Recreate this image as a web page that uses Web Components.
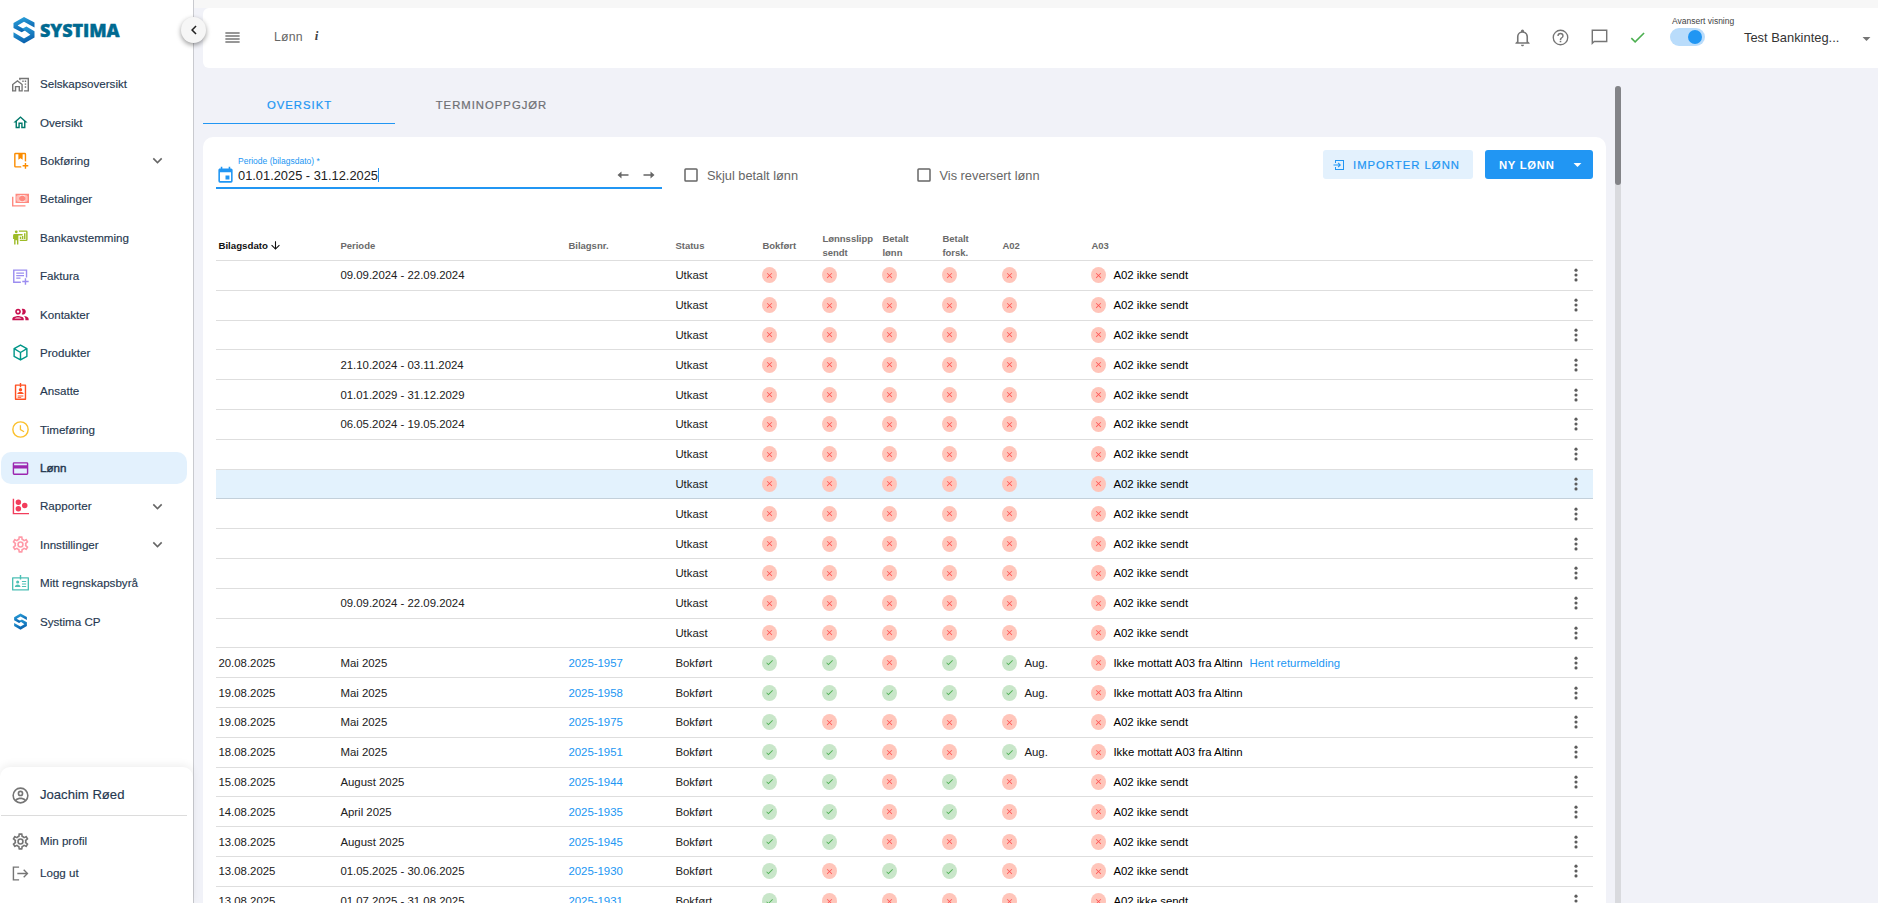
<!DOCTYPE html>
<html lang="no">
<head>
<meta charset="utf-8">
<title>Lønn</title>
<style>
  body {
    margin: 0;
    height: 903px;
    overflow: hidden;
    background: #f1f2f8;
    font-family: "Liberation Sans", Arial, sans-serif;
    font-size: 12px;
    color: #212121;
  }
</style>
</head>
<body>
<app-shell>
  <side-bar slot="side">
    <nav-item icon="homework" color="#757575">Selskapsoversikt</nav-item>
    <nav-item icon="home" color="#00796b">Oversikt</nav-item>
    <nav-item icon="bookplus" color="#fb8c00" more>Bokføring</nav-item>
    <nav-item icon="cash" color="#ff8a80">Betalinger</nav-item>
    <nav-item icon="teach" color="#9dbb27">Bankavstemming</nav-item>
    <nav-item icon="noteplus" color="#9c8df0">Faktura</nav-item>
    <nav-item icon="people" color="#c8104f">Kontakter</nav-item>
    <nav-item icon="cube" color="#009688">Produkter</nav-item>
    <nav-item icon="badge" color="#ff5022">Ansatte</nav-item>
    <nav-item icon="clock" color="#fbc02d">Timeføring</nav-item>
    <nav-item icon="card" color="#9c27b0" active>Lønn</nav-item>
    <nav-item icon="scatter" color="#f23d5c" more>Rapporter</nav-item>
    <nav-item icon="cog" color="#ff9aa8" more>Innstillinger</nav-item>
    <nav-item icon="idcard" color="#4dc0b5">Mitt regnskapsbyrå</nav-item>
    <nav-item icon="logo" color="#0277bd">Systima CP</nav-item>
    <nav-item slot="user" icon="account" color="#757575" big>Joachim Røed</nav-item>
    <nav-item slot="account" icon="cog" color="#757575">Min profil</nav-item>
    <nav-item slot="account" icon="logout" color="#757575">Logg ut</nav-item>
  </side-bar>
  <top-bar heading="Lønn" company="Test Bankinteg..."></top-bar>
  <tab-strip>
    <span class="on">OVERSIKT</span>
    <span>TERMINOPPGJØR</span>
  </tab-strip>
  <content-card>
    <filter-bar></filter-bar>
    <payroll-table></payroll-table>
  </content-card>
</app-shell>

<script>
const ICONS = {
  homework: `<path fill-rule="evenodd" d="M0 11.500 7.700 5.500l7.500 6V22H9.300v-6H6v6H0zM2 12.500V20h2v-6h7.300v6h2v-7.500L7.700 8z"/><path d="M10 2.500h14V22h-7v-2h5V4.500H12V6.500L10 5z"/><path d="M14.500 6.500h2v2h-2zm3.500 0h2v2h-2zm0 4h2v2h-2zm0 4h2v2h-2z"/>`,
  home: `<path d="M12 5.690l5 4.500V18h-2v-6H9v6H7v-7.810l5-4.500M12 3L2 12h3v8h6v-6h2v6h6v-8h3L12 3z"/>`,
  bookplus: `<path d="M13 20c0 .7.130 1.370.350 2H5a2 2 0 0 1-2-2V3a2 2 0 0 1 2-2h13a2 2 0 0 1 2 2v10.350A6 6 0 0 0 18 13V3h-3v8l-3-2.300L9 11V3H5v17zM18 15.500v3h-3v2h3v3h2v-3h3v-2h-3v-3z"/>`,
  cash: `<path fill-rule="evenodd" d="M5 4h19v13H5zM8 6a2 2 0 0 1-1.500 1.500v6A2 2 0 0 1 8 15h12.500a2 2 0 0 1 1.500-1.500v-6A2 2 0 0 1 20.500 6zm6.500.6c2.700 0 4.600 1.700 4.600 3.900s-1.900 3.900-4.600 3.900-4.600-1.700-4.600-3.900 1.900-3.900 4.600-3.900z"/><path opacity=".55" d="M8 6a2 2 0 0 1-1.500 1.500v6A2 2 0 0 1 8 15h3V6zM21 6a2 2 0 0 0 1.500 1.500v6A2 2 0 0 0 21 15h-3V6z"/><circle cx="14.500" cy="10.500" r="1.800"/><path d="M0 8h2v12h17v2H0z"/>`,
  teach: `<path d="M20 17a2 2 0 0 0 2-2V4a2 2 0 0 0-2-2H9.460c.350.610.540 1.300.540 2h10v11h-9v2M15 7v2H9v13H7v-6H5v6H3v-8H1.500V9a2 2 0 0 1 2-2H15M8 4a2 2 0 1 1-4 0 2 2 0 0 1 4 0M17 6h2v8h-2zM14 10h2v4h-2zM11 11h2v3h-2z"/>`,
  noteplus: `<path d="M1.500 2h20v11.300h-2V4h-16v15h9v2h-11z"/><path d="M6 6.500h11v1.700H6zm0 3.500h11v1.700H6zm0 3.500h6v1.700H6zM18 14.500h2v3.500h3.500v2H20v3.500h-2V20h-3.500v-2H18z"/>`,
  people: `<path d="M9 13.750c-2.340 0-7 1.170-7 3.500V19h14v-1.750c0-2.330-4.660-3.500-7-3.500zM4.340 17c.840-.580 2.870-1.250 4.660-1.250s3.820.67 4.660 1.250H4.340zM9 12c1.930 0 3.500-1.570 3.500-3.500S10.930 5 9 5 5.500 6.570 5.500 8.500 7.070 12 9 12zm0-5c.830 0 1.500.67 1.500 1.500S9.830 10 9 10s-1.500-.67-1.500-1.500S8.170 7 9 7zm7.040 6.810c1.160.840 1.960 1.960 1.960 3.440V19h4v-1.750c0-2.020-3.500-3.170-5.960-3.440zM15 12c1.930 0 3.500-1.570 3.500-3.500S16.930 5 15 5c-.540 0-1.040.130-1.500.350.630.890 1 1.980 1 3.150s-.370 2.260-1 3.150c.460.220.960.350 1.500.350z" transform="translate(-1.800 -1.800) scale(1.150)"/>`,
  cube: `<path fill="none" stroke="currentColor" stroke-width="2" stroke-linejoin="round" d="M12 1.500l9 5v11l-9 5-9-5v-11zM3 6.500L12 12l9-5.500M12 12v10.500"/>`,
  badge: `<path fill-rule="evenodd" d="M11 0h2v2h6a1 1 0 0 1 1 1v20a1 1 0 0 1-1 1H5a1 1 0 0 1-1-1V3a1 1 0 0 1 1-1h6zM6 4v18h12V4h-5v2h-2V4z"/><circle cx="12" cy="9.500" r="2.400"/><path d="M7.500 15.500c0-3.700 9-3.700 9 0zM8 17.500h8V19H8zM8 20h5v1H8z"/>`,
  clock: `<circle cx="12" cy="12" r="10.800" fill="none" stroke="currentColor" stroke-width="2"/><path d="M11 6h1.800v5.700l4.700 2.800-.9 1.500-5.600-3.400z"/>`,
  card: `<path d="M21 3H3a2 2 0 0 0-2 2v14a2 2 0 0 0 2 2h18a2 2 0 0 0 2-2V5a2 2 0 0 0-2-2m0 16H3v-7h18v7m0-11.500H3V5h18v2.500z"/>`,
  scatter: `<path d="M1 1h2v20h21v2H1V1M9 2.200a3.900 3.900 0 1 1 0 7.800 3.900 3.900 0 0 1 0-7.800m9 4.600a3.900 3.900 0 1 1 0 7.800 3.900 3.900 0 0 1 0-7.800M9 11.200a3.900 3.900 0 1 1 0 7.800 3.900 3.900 0 0 1 0-7.800"/>`,
  cog: `<path transform="translate(-1.800 -1.800) scale(1.150)" d="M12 8a4 4 0 1 1 0 8 4 4 0 0 1 0-8m0 2a2 2 0 1 0 0 4 2 2 0 0 0 0-4m-2 12c-.25 0-.46-.18-.5-.42l-.37-2.650c-.63-.25-1.170-.59-1.690-.99l-2.490 1.010c-.22.080-.49 0-.61-.22l-2-3.460a.493.493 0 0 1 .12-.64l2.110-1.660L4.500 12l.07-1-2.110-1.630a.493.493 0 0 1-.12-.64l2-3.460c.12-.22.39-.31.61-.22l2.490 1c.52-.39 1.060-.73 1.690-.98l.37-2.650c.04-.24.25-.42.5-.42h4c.25 0 .46.18.5.42l.37 2.650c.63.25 1.170.59 1.690.98l2.490-1c.22-.09.49 0 .61.22l2 3.460c.13.22.07.49-.12.640L19.430 11l.07 1-.07 1 2.110 1.630c.19.15.25.42.12.64l-2 3.460c-.12.22-.39.310-.61.220l-2.490-1c-.52.39-1.060.73-1.690.98l-.37 2.650c-.04.24-.25.420-.5.420h-4m1.250-18l-.37 2.610c-1.200.25-2.260.89-3.030 1.780L5.440 7.350l-.75 1.300L6.800 10.200a5.550 5.550 0 0 0 0 3.600l-2.120 1.560.75 1.300 2.430-1.040c.77.88 1.820 1.520 3.010 1.760l.37 2.620h1.520l.37-2.610c1.190-.25 2.240-.89 3.010-1.770l2.430 1.040.75-1.300-2.120-1.550c.4-1.170.4-2.440 0-3.610l2.110-1.550-.75-1.300-2.410 1.040a5.420 5.420 0 0 0-3.030-1.770L12.750 4h-1.500z"/>`,
  idcard: `<path fill-rule="evenodd" d="M11 0h2v3h10a1 1 0 0 1 1 1v17a1 1 0 0 1-1 1H1a1 1 0 0 1-1-1V4a1 1 0 0 1 1-1h10zM1.900 4.900v15.200h20.200V4.900H13v1.600h-2V4.900z"/><circle cx="8" cy="9.800" r="2.200"/><path d="M4 17c0-5 8-5 8 0zM14 8.500h6V10h-6zm0 3.500h6v1.500h-6zm0 3.500h6V17h-6z"/>`,
  logo: `<linearGradient id="g" x1="0" y1="0" x2=".4" y2="1"><stop offset="0" stop-color="#2fa9e0"/><stop offset="1" stop-color="#0a62ae"/></linearGradient><g fill="url(#g)"><path d="M3 6 12 .800 21 5.500V9.800L12 5 6.500 8.200 13.500 12 10 14 3 10.200z"/><path d="M10.500 11 14 9l7 4V18.500L12 23.500 3 18.300V14l9 5.200 5.500-3.200z"/></g>`,
  account: `<path transform="translate(-1.800 -1.800) scale(1.150)" fill-rule="evenodd" d="M12 2a10 10 0 1 1 0 20 10 10 0 0 1 0-20M7.070 18.280c.43-.9 3.050-1.780 4.930-1.780s4.510.88 4.930 1.780A7.900 7.900 0 0 1 12 20a7.900 7.900 0 0 1-4.930-1.720m11.290-1.450c-1.430-1.740-4.900-2.330-6.360-2.330s-4.930.59-6.360 2.330A7.930 7.930 0 0 1 4 12c0-4.410 3.590-8 8-8s8 3.590 8 8c0 1.820-.62 3.500-1.640 4.830M12 6a3.500 3.500 0 1 0 0 7 3.500 3.500 0 0 0 0-7m0 5a1.500 1.500 0 1 1 0-3 1.500 1.500 0 0 1 0 3z"/>`,
  logout: `<path d="M1 2h9v2H3v16h7v2H1zM7.500 11h12l-3.700-3.700L17.200 6l6 6-6 6-1.400-1.400 3.700-3.600h-12z"/>`,
  down: `<path d="M7.410 8.580 12 13.170l4.590-4.590L18 10l-6 6-6-6z"/>`,
  left: `<path d="M15.410 16.580 10.830 12l4.580-4.590L14 6l-6 6 6 6z"/>`,
  caret: `<path d="M7 10l5 5 5-5z"/>`,
  menu: `<path d="M3 5.500h18v1.700H3zm0 3.800h18V11H3zm0 3.700h18v1.700H3zm0 3.800h18v1.700H3z"/>`,
  bell: `<path d="M10 21h4c0 1.100-.9 2-2 2s-2-.9-2-2m11-2v1H3v-1l2-2v-6c0-3.100 2.030-5.830 5-6.710V4a2 2 0 0 1 4 0v.29c2.970.88 5 3.610 5 6.710v6l2 2m-4-8a5 5 0 0 0-10 0v7h10v-7z"/>`,
  help: `<path d="M11 18h2v-2h-2v2m1-16a10 10 0 1 0 0 20 10 10 0 0 0 0-20m0 18.300a8.300 8.300 0 1 1 0-16.600 8.300 8.300 0 0 1 0 16.600M12 6a4 4 0 0 0-4 4h1.800c0-1.200 1-2.200 2.200-2.200s2.200 1 2.200 2.200c0 2-3.100 1.800-3.100 5h1.800c0-2.300 3.100-2.500 3.100-5a4 4 0 0 0-4-4z"/>`,
  chat: `<path d="M2 2h20v16H5.500L2 21.500zM3.800 3.800v13.600l1-1.200h15.400V3.800z"/>`,
  check: `<path d="M21 7 9 19l-5.500-5.500 1.410-1.410L9 16.170 19.590 5.590z"/>`,
  close: `<path d="M19 6.410 17.590 5 12 10.590 6.410 5 5 6.410 10.590 12 5 17.590 6.410 19 12 13.410 17.590 19 19 17.590 13.410 12z"/>`,
  calendar: `<path d="M19 19H5V8h14m-3-7v2H8V1H6v2H5c-1.110 0-2 .89-2 2v14a2 2 0 0 0 2 2h14a2 2 0 0 0 2-2V5a2 2 0 0 0-2-2h-1V1m-1 11h-5v5h5v-5z"/>`,
  arrowleft: `<path d="M1 12l8-7v5.500h14v3H9V19z"/>`,
  arrowright: `<path d="M23 12l-8-7v5.500H1v3h14V19z"/>`,
  arrowdown: `<path d="M11 4h2v12l5.500-5.500 1.420 1.420L12 19.840l-7.920-7.920L5.500 10.500 11 16V4z"/>`,
  box: `<path d="M19 3H5a2 2 0 0 0-2 2v14a2 2 0 0 0 2 2h14a2 2 0 0 0 2-2V5a2 2 0 0 0-2-2m0 2v14H5V5z"/>`,
  dots: `<circle cx="12" cy="5.500" r="2.100"/><circle cx="12" cy="12" r="2.100"/><circle cx="12" cy="18.500" r="2.100"/>`,
  enter: `<path d="M22 2H4v6h2V4h14v16H6v-4H4v6h18zM1 11h11L9.500 8.500 11 7l5 5-5 5-1.500-1.500L12 13H1z"/>`
};

class UiIcon extends HTMLElement {
  constructor() {
    super();
    this.attachShadow({ mode: "open" });
  }

  connectedCallback() {
    const size = this.getAttribute("size") || 19;
    this.shadowRoot.innerHTML = `
      <style>
        :host { display: inline-flex; flex: none; width: ${size}px; height: ${size}px; }
        svg { width: 100%; height: 100%; fill: currentColor; overflow: visible; }
      </style>
      <svg viewBox="0 0 24 24">${ICONS[this.getAttribute("name")]}</svg>`;
  }
}

class AppShell extends HTMLElement {
  constructor() {
    super();
    this.attachShadow({ mode: "open" }).innerHTML = `
      <style>
        :host { display: flex; height: 903px; position: relative; }
        main {
          flex: 1;
          min-width: 0;
          display: flex;
          flex-direction: column;
          padding-left: 9px;
          border-top: 8px solid #f7f7f7;
          box-sizing: border-box;
        }
        .toggle {
          position: absolute;
          left: 181px;
          top: 17px;
          width: 25px;
          height: 26px;
          border-radius: 50%;
          background: #f6f6f6;
          box-shadow: 0 2px 5px rgba(0,0,0,.4);
          display: flex;
          align-items: center;
          justify-content: center;
        }
        .scroll {
          position: absolute;
          left: 1615px;
          top: 86px;
          bottom: 0;
          width: 6px;
          border-radius: 3px 3px 0 0;
          background: #d9dade;
        }
        .thumb { height: 99px; border-radius: 3px; background: #838488; }
      </style>
      <slot name="side"></slot>
      <main><slot></slot></main>
      <div class="toggle"><ui-icon name="left" size="18"></ui-icon></div>
      <div class="scroll"><div class="thumb"></div></div>`;
  }
}

class SideBar extends HTMLElement {
  constructor() {
    super();
    this.attachShadow({ mode: "open" }).innerHTML = `
      <style>
        :host {
          display: flex;
          flex-direction: column;
          width: 194px;
          box-sizing: border-box;
          background: #fff;
          border-right: 1px solid #c9cacf;
        }
        .brand {
          display: flex;
          align-items: center;
          height: 60px;
          padding: 0 0 0 10px;
          box-sizing: border-box;
        }
        .brand b {
          margin: -1px 0 0 2px;
          font: 800 18px "Open Sans", sans-serif;
          color: #006a91;
          -webkit-text-stroke: .4px #006a91;
          letter-spacing: -.1px;
        }
        nav {
          flex: 1;
          display: flex;
          flex-direction: column;
          gap: 6.4px;
          padding: 8.2px 6px 0 1px;
        }
        footer {
          height: 136px;
          box-sizing: border-box;
          padding: 12px 6px 0 1px;
          border-radius: 10px 10px 0 0;
          box-shadow: 0 -2px 8px rgba(0,0,0,.07);
        }
        .user { padding-bottom: 4px; border-bottom: 1px solid #dcdcdc; margin-bottom: 9px; }
      </style>
      <div class="brand">
        <ui-icon name="logo" size="28"></ui-icon>
        <b>SYSTIMA</b>
      </div>
      <nav><slot></slot></nav>
      <footer>
        <div class="user"><slot name="user"></slot></div>
        <slot name="account"></slot>
      </footer>`;
  }
}

class NavItem extends HTMLElement {
  constructor() {
    super();
    this.attachShadow({ mode: "open" });
  }

  connectedCallback() {
    this.shadowRoot.innerHTML = `
      <style>
        :host {
          display: flex;
          align-items: center;
          height: 32px;
          box-sizing: border-box;
          padding: 0 20px 0 11px;
          border-radius: 10px;
          color: #263850;
          font-size: 11.6px;
          -webkit-text-stroke: .15px;
        }
        :host([active]) { background: #e3f1fd; -webkit-text-stroke: .45px; }
        :host([big]) { font-size: 13.1px; }
        ui-icon { margin-right: 11px; }
        .label { flex: 1; padding-bottom: 1px; white-space: nowrap; }
        .more { margin: 0; color: #666; }
      </style>
      <ui-icon name="${this.getAttribute("icon")}" size="17" style="color:${this.getAttribute("color")}"></ui-icon>
      <span class="label"><slot></slot></span>
      ${this.hasAttribute("more") ? '<ui-icon class="more" name="down" size="19"></ui-icon>' : ""}`;
  }
}

class TopBar extends HTMLElement {
  constructor() {
    super();
    this.attachShadow({ mode: "open" });
  }

  connectedCallback() {
    this.shadowRoot.innerHTML = `
      <style>
        :host {
          display: flex;
          align-items: center;
          height: 60px;
          flex: none;
          box-sizing: border-box;
          padding: 0 2px 0 20px;
          background: #fff;
          border-radius: 6px 0 0 6px;
          color: #757575;
        }
        .title { margin: -2px 0 0 32px; font-size: 12.3px; letter-spacing: .2px; color: #666; }
        .info { margin: -4px 0 0 12px; font: italic bold 13px "Liberation Serif", serif; color: #444; }
        .tools { margin: -1px 0 0 auto; display: flex; align-items: center; gap: 19.4px; }
        .ok { color: #4caf50; }
        .adv { margin: -14px 0 0 25px; width: 64px; font-size: 8.5px; color: #444; white-space: nowrap; }
        .switch {
          margin: 2px 0 0 -2px;
          width: 35px;
          height: 18px;
          border-radius: 9px;
          background: #b9dcfb;
          display: flex;
          align-items: center;
          justify-content: flex-end;
          padding-right: 3px;
          box-sizing: border-box;
        }
        .switch::after { content: ""; width: 14px; height: 14px; border-radius: 50%; background: #2196f3; }
        .company { width: 97px; margin: -2px 16px 0 8px; font-size: 12.9px; color: #333; white-space: nowrap; }
        .menu { margin-top: -1px; }
      </style>
      <ui-icon class="menu" name="menu" size="19"></ui-icon>
      <span class="title">${this.getAttribute("heading")}</span>
      <span class="info">i</span>
      <div class="tools">
        <ui-icon name="bell"></ui-icon>
        <ui-icon name="help"></ui-icon>
        <ui-icon name="chat"></ui-icon>
        <ui-icon class="ok" name="check"></ui-icon>
      </div>
      <div class="adv">Avansert visning<div class="switch"></div></div>
      <span class="company">${this.getAttribute("company")}</span>
      <ui-icon name="caret"></ui-icon>`;
  }
}

class TabStrip extends HTMLElement {
  constructor() {
    super();
    this.attachShadow({ mode: "open" }).innerHTML = `
      <style>
        :host { display: flex; flex: none; height: 56px; box-sizing: border-box; padding-top: 18px; }
        ::slotted(span) {
          width: 192px;
          box-sizing: border-box;
          padding-left: 1px;
          text-align: center;
          line-height: 38px;
          font-size: 11.3px;
          letter-spacing: 1px;
          color: #6e6f73;
          -webkit-text-stroke: .2px;
        }
        ::slotted(.on) { color: #2196f3; border-bottom: 1px solid #2196f3; }
      </style>
      <slot></slot>`;
  }
}

class ContentCard extends HTMLElement {
  constructor() {
    super();
    this.attachShadow({ mode: "open" }).innerHTML = `
      <style>
        :host {
          display: block;
          flex: 1;
          min-height: 0;
          overflow: hidden;
          width: 1403px;
          box-sizing: border-box;
          margin-top: 13px;
          padding: 13px 13px 0;
          border-radius: 10px 10px 0 0;
          background: #fff;
        }
      </style>
      <slot></slot>`;
  }
}

class FilterBar extends HTMLElement {
  constructor() {
    super();
    this.attachShadow({ mode: "open" }).innerHTML = `
      <style>
        :host { display: flex; height: 79px; white-space: nowrap; }
        .field {
          width: 446px;
          height: 39px;
          box-sizing: border-box;
          border-bottom: 2px solid #2196f3;
          display: flex;
          align-items: flex-end;
          padding: 0 3px 2px 0;
          color: #2196f3;
        }
        .value { flex: 1; margin-left: 3px; font-size: 8.5px; line-height: 12px; }
        .value div { font-size: 12.85px; line-height: 18px; color: #212121; }
        .value i { display: inline-block; width: 1px; height: 14px; background: #2196f3; vertical-align: -2px; }
        .arrows { color: #666; display: flex; gap: 14px; margin: 0 4px 4px 0; }
        .check { display: flex; align-items: center; height: 18px; margin: 16px 0 0 20px; color: #666; font-size: 12.8px; width: 212.5px; }
        .check ui-icon { margin-right: 7px; }
        .buttons { margin-left: auto; display: flex; gap: 12px; }
        .btn {
          height: 29px;
          box-sizing: border-box;
          display: flex;
          align-items: center;
          border-radius: 3px;
          font-size: 11.3px;
          letter-spacing: 1px;
        }
        .light { width: 150px; padding-left: 10px; background: #e3f1fd; color: #2196f3; -webkit-text-stroke: .2px; }
        .light ui-icon { margin-right: 8px; }
        .blue { width: 108px; padding: 0 6px 0 14px; justify-content: space-between; background: #2196f3; color: #fff; font-weight: bold; letter-spacing: .7px; }
      </style>
      <div class="field">
        <ui-icon name="calendar" size="19"></ui-icon>
        <div class="value">Periode (bilagsdato) *<div>01.01.2025 - 31.12.2025<i></i></div></div>
        <div class="arrows"><ui-icon name="arrowleft" size="12"></ui-icon><ui-icon name="arrowright" size="12"></ui-icon></div>
      </div>
      <div class="check"><ui-icon name="box" size="18"></ui-icon>Skjul betalt lønn</div>
      <div class="check"><ui-icon name="box" size="18"></ui-icon>Vis reversert lønn</div>
      <div class="buttons">
        <div class="btn light"><ui-icon name="enter" size="12"></ui-icon>IMPORTER LØNN</div>
        <div class="btn blue">NY LØNN<ui-icon name="caret" size="19"></ui-icon></div>
      </div>`;
  }
}

class StatusDot extends HTMLElement {
  constructor() {
    super();
    this.attachShadow({ mode: "open" });
  }

  connectedCallback() {
    const ok = this.hasAttribute("ok");
    this.shadowRoot.innerHTML = `
      <style>
        :host {
          display: inline-flex;
          flex: none;
          align-items: center;
          justify-content: center;
          width: 15px;
          height: 16px;
          border-radius: 50%;
          background: ${ok ? "#c8e6c9" : "#ffc5ba"};
          color: ${ok ? "#4caf50" : "#ff5252"};
        }
      </style>
      <ui-icon name="${ok ? "check" : "close"}" size="9"></ui-icon>`;
  }
}

// dato, periode, bilagsnr, flagg (bokført, slipp, lønn, forsk., A02)
const ROWS = [
  ["", "09.09.2024 - 22.09.2024", "", "xxxxx"],
  ["", "", "", "xxxxx"],
  ["", "", "", "xxxxx"],
  ["", "21.10.2024 - 03.11.2024", "", "xxxxx"],
  ["", "01.01.2029 - 31.12.2029", "", "xxxxx"],
  ["", "06.05.2024 - 19.05.2024", "", "xxxxx"],
  ["", "", "", "xxxxx"],
  ["", "", "", "xxxxx"],
  ["", "", "", "xxxxx"],
  ["", "", "", "xxxxx"],
  ["", "", "", "xxxxx"],
  ["", "09.09.2024 - 22.09.2024", "", "xxxxx"],
  ["", "", "", "xxxxx"],
  ["20.08.2025", "Mai 2025", "2025-1957", "vvxvv"],
  ["19.08.2025", "Mai 2025", "2025-1958", "vvvvv"],
  ["19.08.2025", "Mai 2025", "2025-1975", "vxxxx"],
  ["18.08.2025", "Mai 2025", "2025-1951", "vvxxv"],
  ["15.08.2025", "August 2025", "2025-1944", "vvxvx"],
  ["14.08.2025", "April 2025", "2025-1935", "vvxvx"],
  ["13.08.2025", "August 2025", "2025-1945", "vvxxx"],
  ["13.08.2025", "01.05.2025 - 30.06.2025", "2025-1930", "vxvvx"],
  ["13.08.2025", "01.07.2025 - 31.08.2025", "2025-1931", "vxxxx"]
];
const HOVERED = 7;

class PayrollTable extends HTMLElement {
  constructor() {
    super();
    this.attachShadow({ mode: "open" }).innerHTML = `
      <style>
        :host { display: block; font-size: 11.4px; white-space: nowrap; }
        .row {
          display: grid;
          grid-template-columns: 122px 228px 107px 87px 60px 60px 60px 60px 89px 1fr 19px;
          align-items: center;
          height: 29.81px;
          box-sizing: border-box;
          padding: 0 7px 0 2.4px;
          border-bottom: 1px solid #dedede;
        }
        .head {
          height: 32px;
          padding-top: 2px;
          font-size: 9.5px;
          line-height: 14px;
          font-weight: bold;
          color: #6a6a6a;
        }
        .head .sorted { color: #111; font-size: 9.7px; display: flex; align-items: center; gap: 1px; }
        .hover { background: #e3f2fd; border-color: #c3d0da; }
        .cell { display: flex; align-items: center; }
        .cell span { margin-left: 7px; }
        .a03 { color: #000; }
        .link { color: #2196f3; }
        .dots { color: #5c5c5c; }
      </style>
      <div class="row head">
        <div class="sorted">Bilagsdato<ui-icon name="arrowdown" size="13"></ui-icon></div>
        <div>Periode</div><div>Bilagsnr.</div><div>Status</div><div>Bokført</div>
        <div>Lønnsslipp<br>sendt</div><div>Betalt<br>lønn</div><div>Betalt<br>forsk.</div>
        <div>A02</div><div>A03</div>
      </div>
      ${ROWS.map((row, i) => this.row(row, i)).join("")}`;
  }

  row([date, period, nr, flags], i) {
    const dots = [...flags].map((f) => `<status-dot ${f === "v" ? "ok" : ""}></status-dot>`);
    const sent = flags[4] === "v";
    return `
      <div class="row ${i === HOVERED ? "hover" : ""}">
        <div>${date}</div>
        <div>${period}</div>
        <div class="link">${nr}</div>
        <div>${nr ? "Bokført" : "Utkast"}</div>
        ${dots.slice(0, 4).map((d) => `<div class="cell">${d}</div>`).join("")}
        <div class="cell">${dots[4]}${sent ? "<span>Aug.</span>" : ""}</div>
        <div class="cell a03">
          <status-dot></status-dot>
          <span>${sent ? "Ikke mottatt A03 fra Altinn" : "A02 ikke sendt"}</span>
          ${i === 13 ? '<span class="link">Hent returmelding</span>' : ""}
        </div>
        <ui-icon class="dots" name="dots" size="18"></ui-icon>
      </div>`;
  }
}

customElements.define("ui-icon", UiIcon);
customElements.define("app-shell", AppShell);
customElements.define("side-bar", SideBar);
customElements.define("nav-item", NavItem);
customElements.define("top-bar", TopBar);
customElements.define("tab-strip", TabStrip);
customElements.define("content-card", ContentCard);
customElements.define("filter-bar", FilterBar);
customElements.define("status-dot", StatusDot);
customElements.define("payroll-table", PayrollTable);
</script>
</body>
</html>
